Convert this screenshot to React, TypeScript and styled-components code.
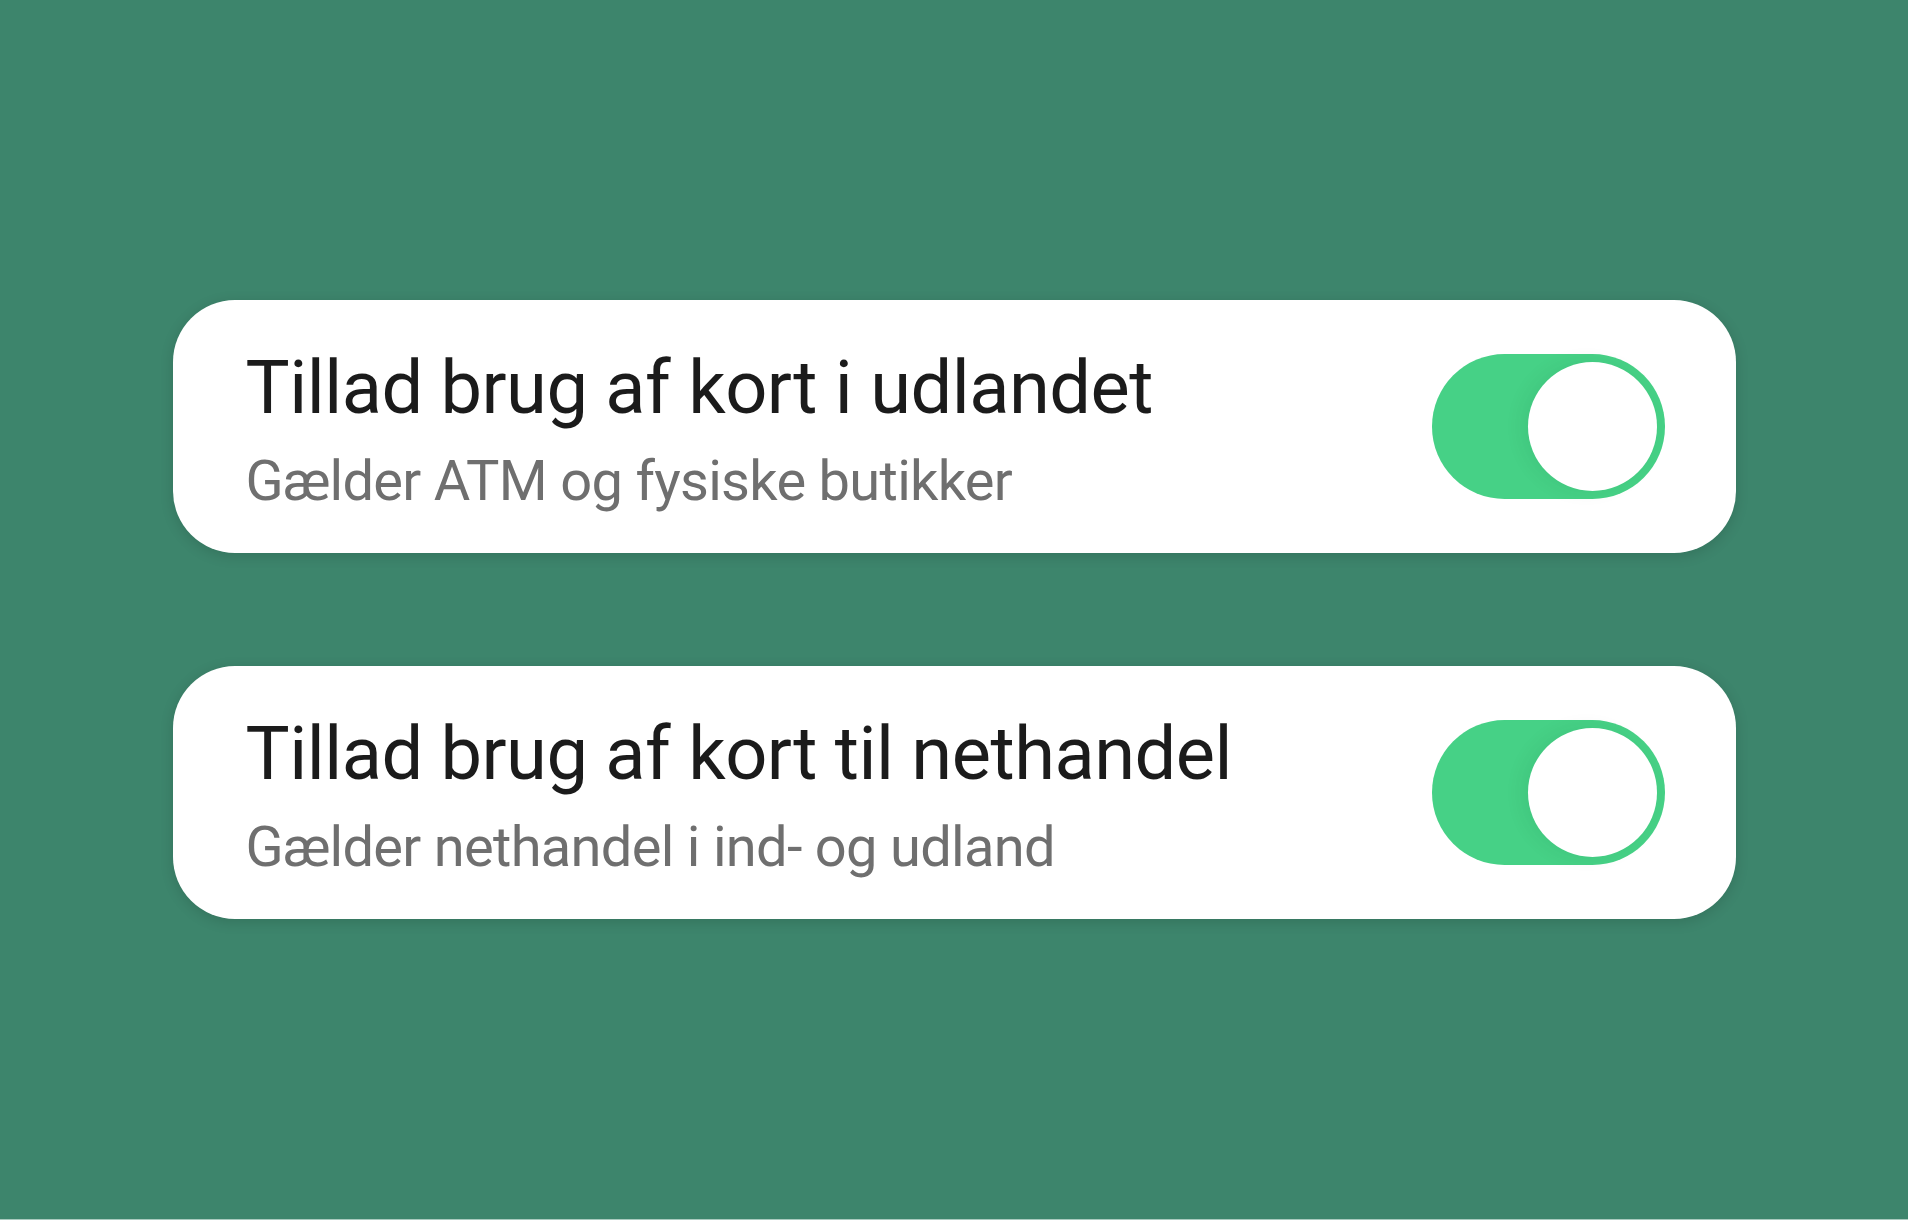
import * as React from 'react'
import styled, { createGlobalStyle } from 'styled-components'

const { useState } = React

const GlobalStyle = createGlobalStyle`
  html, body {
    margin: 0;
    padding: 0;
    background: #3d856c;
  }
  body {
    font-family: Roboto, 'Noto Sans', sans-serif;
  }
`

type Setting = {
  id: string
  title: string
  subtitle: string
}

const settings: Setting[] = [
  {
    id: 'abroad',
    title: 'Tillad brug af kort i udlandet',
    subtitle: 'Gælder ATM og fysiske butikker',
  },
  {
    id: 'online',
    title: 'Tillad brug af kort til nethandel',
    subtitle: 'Gælder nethandel i ind- og udland',
  },
]

const App: React.FC = () => {
  const [enabled, setEnabled] = useState<Record<string, boolean>>({
    abroad: true,
    online: true,
  })

  const toggle = (id: string) => () =>
    setEnabled((prev) => ({ ...prev, [id]: !prev[id] }))

  return (
    <Page>
      <GlobalStyle />
      {settings.map((s) => (
        <Card key={s.id}>
          <Texts>
            <Title>{s.title}</Title>
            <Subtitle>{s.subtitle}</Subtitle>
          </Texts>
          <Switch
            type="button"
            role="switch"
            aria-checked={enabled[s.id]}
            $on={enabled[s.id]}
            onClick={toggle(s.id)}
          >
            <Knob $on={enabled[s.id]} />
          </Switch>
        </Card>
      ))}
    </Page>
  )
}

const Page = styled.main`
  box-sizing: border-box;
  height: 1220px;
  display: flex;
  flex-direction: column;
  justify-content: center;
  align-items: center;
  gap: 113px;
  border-bottom: 1px solid #a9cbbf;
`

const Card = styled.section`
  box-sizing: border-box;
  width: 1563px;
  height: 253px;
  padding: 0 71px 0 73px;
  display: flex;
  align-items: center;
  justify-content: space-between;
  background: #ffffff;
  border-radius: 62px;
  box-shadow: 0 3px 14px rgba(0, 0, 0, 0.14);
`

const Texts = styled.div`
  display: flex;
  flex-direction: column;
  gap: 17px;
  padding-top: 6px;
`

const Title = styled.h2`
  margin: 0;
  font-size: 74px;
  line-height: 86px;
  font-weight: 400;
  letter-spacing: -0.5px;
  color: #1b1b1b;
`

const Subtitle = styled.p`
  margin: 0;
  font-size: 56px;
  line-height: 66px;
  font-weight: 400;
  letter-spacing: -0.7px;
  color: #6f6f6f;
`

const Switch = styled.button<{ $on: boolean }>`
  position: relative;
  flex: none;
  width: 233px;
  height: 145px;
  padding: 0;
  border: none;
  border-radius: 73px;
  background: ${(p) => (p.$on ? '#46d186' : '#c9c9c9')};
  cursor: pointer;
  outline: 0;
`

const Knob = styled.span<{ $on: boolean }>`
  position: absolute;
  top: 8px;
  left: ${(p) => (p.$on ? '96px' : '8px')};
  width: 129px;
  height: 129px;
  border-radius: 50%;
  background: #ffffff;
  box-shadow: -6px 0 18px rgba(0, 80, 40, 0.08);
  transition: left 0.2s ease;
`

export default App
